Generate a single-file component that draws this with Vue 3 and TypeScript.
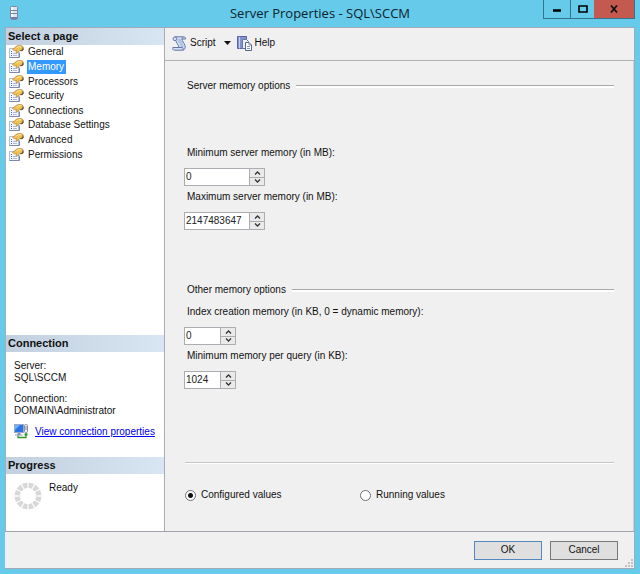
<script setup lang="ts">
import { reactive, ref } from 'vue'

interface Field {
  id: string
  label: string
  value: string
  narrow: boolean
}
interface Group {
  title: string
  spread: boolean
  fields: Field[]
}

const pages: string[] = [
  'General',
  'Memory',
  'Processors',
  'Security',
  'Connections',
  'Database Settings',
  'Advanced',
  'Permissions',
]
const current = ref('Memory')
const mode = ref('configured')

const groups = reactive<Group[]>([
  {
    title: 'Server memory options',
    spread: true,
    fields: [
      { id: 'min-server', label: 'Minimum server memory (in MB):', value: '0', narrow: false },
      { id: 'max-server', label: 'Maximum server memory (in MB):', value: '2147483647', narrow: false },
    ],
  },
  {
    title: 'Other memory options',
    spread: false,
    fields: [
      { id: 'index-mem', label: 'Index creation memory (in KB, 0 = dynamic memory):', value: '0', narrow: true },
      { id: 'query-mem', label: 'Minimum memory per query (in KB):', value: '1024', narrow: true },
    ],
  },
])

const spokes: number[] = Array.from({ length: 12 }, (_, i) => i * 30 + 15)

function step(field: Field, delta: number): void {
  field.value = String(Math.max(0, Number(field.value) + delta))
}
</script>

<template>
  <div class="window">
    <header class="titlebar">
      <svg class="server-icon" width="10" height="14" viewBox="0 0 10 14" aria-hidden="true">
        <rect x="0.5" y="0.5" width="7" height="13" rx="1" fill="#dfe3ee" stroke="#7f8ba6" />
        <path d="M2 1v12" stroke="#fff" stroke-width="1.5" />
        <path d="M1 4.500h6M1 7.500h6" stroke="#7784a0" />
        <rect x="1" y="11" width="6" height="2" fill="#6f80a8" />
      </svg>
      <h1 class="title">Server Properties - SQL\SCCM</h1>
      <div class="controls">
        <button type="button" class="ctl min" aria-label="Minimize">
          <svg width="10" height="10" viewBox="0 0 10 10"><path d="M1 6.5h8" stroke="#000" stroke-width="2.6" /></svg>
        </button>
        <button type="button" class="ctl max" aria-label="Maximize">
          <svg width="10" height="10" viewBox="0 0 10 10"><path d="M1 2h8v6H1z" fill="none" stroke="#000" stroke-width="1.6" /></svg>
        </button>
        <button type="button" class="ctl close" aria-label="Close">
          <svg width="10" height="10" viewBox="0 0 10 10"><path d="M2 1.5l6 7M8 1.5l-6 7" stroke="#111" stroke-width="1.8" /></svg>
        </button>
      </div>
    </header>

    <div class="client">
      <div class="body">
        <aside class="sidebar">
          <h2 class="bar">Select a page</h2>
          <ul class="pages">
            <li v-for="page in pages" :key="page" class="page">
              <svg width="15" height="14" viewBox="0 0 15 14" aria-hidden="true">
                <rect x="0.5" y="3.5" width="9" height="9" fill="#f4f6fd" stroke="#b3bedb" />
                <path d="M.5 12.500h10V7.500" fill="none" stroke="#7b88ac" />
                <path d="M2 6.500h1M2 8.500h1M2 10.500h1" stroke="#5468b0" />
                <path d="M4 8.500h4M4 10.500h4" stroke="#a9b6de" />
                <path d="M3.500 4.500L7 1.500 9 .6h3.500l1.500 1.200v3.500l-2 .7-1.500-.4L8.500 8 7 7.500 7.500 5.500 5.500 5.800z" fill="#f0c052" stroke="#a07c34" stroke-width=".6" />
                <path d="M7.500 3L9.500 1.800h2.500" fill="none" stroke="#ffeb9c" />
                <path d="M11.500 5.500l2.500-.5V2.500" fill="none" stroke="#4a4030" />
              </svg>
              <button type="button" class="page-name" :class="{ selected: page === current }" @click="current = page">
                {{ page }}
              </button>
            </li>
          </ul>

          <section class="connection">
            <h2 class="bar">Connection</h2>
            <dl class="facts">
              <div>
                <dt>Server:</dt>
                <dd>SQL\SCCM</dd>
              </div>
              <div>
                <dt>Connection:</dt>
                <dd>DOMAIN\Administrator</dd>
              </div>
            </dl>
            <div class="view">
              <svg width="16" height="15" viewBox="0 0 16 15" aria-hidden="true">
                <rect x="0.500" y="0.500" width="9" height="8" fill="#2874e4" stroke="#9aa9c8" />
                <path d="M1 1h5L1 6z" fill="#6fb0fa" />
                <path d="M3.500 9h3v1.500h2v1H1v-1h2.500z" fill="#8694b4" />
                <rect x="10.500" y="0.500" width="3" height="8" rx="1" fill="#e6e9ef" stroke="#8a919e" />
                <path d="M11 3h2M11 5h2" stroke="#8a919e" />
                <path d="M4 11.500v2h8V9" fill="none" stroke="#2f9632" stroke-width="1.300" />
                <path d="M10.500 10.500h3" stroke="#2f9632" stroke-width="2" />
              </svg>
              <a href="#">View connection properties</a>
            </div>
          </section>

          <section class="progress">
            <h2 class="bar">Progress</h2>
            <div class="status">
              <svg width="28" height="28" viewBox="-14 -14 28 28" aria-hidden="true">
                <path
                  v-for="angle in spokes"
                  :key="angle"
                  d="M-2.800 -13.300L2.800 -13.300L1.700 -8L-1.700 -8Z"
                  fill="#d8d8d8"
                  :transform="`rotate(${angle})`"
                />
              </svg>
              <span>Ready</span>
            </div>
          </section>
        </aside>

        <main class="main">
          <div class="toolbar">
            <button type="button" class="tool">
              <svg width="15" height="15" viewBox="0 0 15 15" aria-hidden="true">
                <path d="M3 .8h8.500c1.500 0 2.200 1 2.200 2.200H10c0 2 2.200 4 3 6.500.6 2-.2 4.500-2 4.700H2.500C1 14.200.5 13 .8 11.500H7C6.500 8.500 4 6.500 3.800 4.500H2C.5 4 .8 1 3 .8z" fill="#d3def5" stroke="#6577a5" />
                <path d="M3 .8c1.500 0 2 1.200 1.800 3.500M10 3c0-1 .5-2 1.500-2M7 11.500h3.500c.8.500.8 2 .2 2.700" fill="none" stroke="#6577a5" />
                <path d="M6 4h3M6.500 6h3.500M8 8h3M8.500 10h3" stroke="#93a5d0" />
              </svg>
              <span>Script</span>
            </button>
            <button type="button" class="drop" aria-label="Script options">
              <svg width="7" height="4" viewBox="0 0 7 4"><path d="M0 0h7L3.500 4z" fill="#111" /></svg>
            </button>
            <button type="button" class="tool">
              <svg width="15" height="15" viewBox="0 0 15 15" aria-hidden="true">
                <path d="M.5.500h9v12h-9z" fill="#8592cb" stroke="#56639f" />
                <path d="M2.500 1v11.500" stroke="#c3cdf0" />
                <path d="M5.500 3.500h4l2 2v7h-6z" fill="#eef2fc" stroke="#6878a8" />
                <path d="M8.500 6.500h3.500l2.500 2.500v5.500h-6z" fill="#fff" stroke="#566490" />
                <path d="M12 6.500V9h2.500M10 10.500h3M10 12.500h3" fill="none" stroke="#8796c0" />
              </svg>
              <span>Help</span>
            </button>
          </div>

          <form class="form" @submit.prevent>
            <section v-for="group in groups" :key="group.title" class="group" :class="{ spread: group.spread }">
              <h3 class="group-title">{{ group.title }}</h3>
              <div class="fields">
                <div v-for="field in group.fields" :key="field.id" class="field">
                  <label :for="field.id">{{ field.label }}</label>
                  <div class="spinner" :class="{ narrow: field.narrow }">
                    <input :id="field.id" v-model="field.value" type="text" inputmode="numeric" />
                    <div class="arrows">
                      <button type="button" aria-label="Increase" @click="step(field, 1)">
                        <svg width="7" height="4" viewBox="0 0 7 4"><path d="M1 3.500l2.500-2.500L6 3.500" fill="none" stroke="#333" stroke-width="1.300" /></svg>
                      </button>
                      <button type="button" aria-label="Decrease" @click="step(field, -1)">
                        <svg width="7" height="4" viewBox="0 0 7 4"><path d="M1 .5l2.500 2.500L6 .5" fill="none" stroke="#333" stroke-width="1.300" /></svg>
                      </button>
                    </div>
                  </div>
                </div>
              </div>
            </section>

            <div class="modes">
              <label class="mode"><input v-model="mode" type="radio" name="mode" value="configured" />Configured values</label>
              <label class="mode"><input v-model="mode" type="radio" name="mode" value="running" />Running values</label>
            </div>
          </form>
        </main>
      </div>

      <footer class="footer">
        <button type="button" class="push default">OK</button>
        <button type="button" class="push">Cancel</button>
        <svg class="grip" width="8" height="8" viewBox="0 0 8 8" aria-hidden="true">
          <path d="M6 0h2v2H6zM3 3h2v2H3zM6 3h2v2H6zM0 6h2v2H0zM3 6h2v2H3zM6 6h2v2H6z" fill="#c2c2c2" />
        </svg>
      </footer>
    </div>
  </div>
</template>

<style>
body {
  margin: 0;
}
</style>

<style scoped>
* {
  box-sizing: border-box;
}
.window {
  display: flex;
  flex-direction: column;
  min-height: 100vh;
  padding: 0 5px 5px;
  background: #66caea;
  color: #111;
  font: 10px/12px "Liberation Sans", Arial, sans-serif;
}
h1,
h2,
h3,
ul,
dl,
dd {
  margin: 0;
  padding: 0;
  font-size: inherit;
  font-weight: normal;
}
button {
  margin: 0;
  padding: 0;
  border: 0;
  background: none;
  color: inherit;
  font: inherit;
}
svg {
  display: block;
  flex: none;
}

.titlebar {
  display: grid;
  grid-template-columns: 92px 1fr 92px;
  height: 27px;
}
.server-icon {
  margin: 6px 0 0 5px;
}
.title {
  color: #0b222b;
  font: 13px/27px "Open Sans", "Noto Sans", sans-serif;
  text-align: center;
}
.controls {
  display: flex;
  height: 19px;
  border: 1px solid #36748b;
  border-top: 0;
}
.ctl {
  display: flex;
  align-items: center;
  justify-content: center;
}
.min {
  width: 26px;
}
.max {
  width: 24px;
  border-left: 1px solid #36748b;
}
.close {
  flex: 1;
  background: #c3594f;
}

.client {
  display: flex;
  flex: 1;
  flex-direction: column;
  border: 1px solid #a3aab5;
  border-width: 1px 1px 1px 0;
  background: #f0f0f0;
}
.body {
  display: flex;
  flex: 1;
}

.sidebar {
  display: flex;
  flex: none;
  flex-direction: column;
  width: 160px;
  border: 1px solid #a9acb5;
  border-width: 0 1px 0 1px;
  background: #fff;
}
.bar {
  height: 17px;
  padding-left: 2px;
  background: linear-gradient(90deg, #c2d0df, #d8e6f3);
  font-size: 11px;
  font-weight: bold;
  line-height: 17px;
}
.pages {
  display: grid;
  grid-template-rows: repeat(8, 1fr);
  height: 117px;
  margin-bottom: auto;
  list-style: none;
}
.page {
  display: flex;
  align-items: center;
  gap: 3px;
  padding-left: 3px;
}
.page-name {
  height: 14px;
  padding: 0 2px 0 1px;
  line-height: 14px;
}
.selected {
  background: #3399ff;
  color: #fff;
}
.connection {
  height: 122px;
}
.facts {
  display: flex;
  flex-direction: column;
  gap: 9px;
  padding: 8px 8px 0;
}
.view {
  display: flex;
  align-items: center;
  gap: 5px;
  padding: 7px 0 0 8px;
  white-space: nowrap;
}
.view a {
  color: #0000f0;
}
.progress {
  height: 74px;
}
.status {
  display: flex;
  gap: 7px;
  padding: 8px 8px 0;
}

.main {
  display: flex;
  flex: 1;
  flex-direction: column;
}
.toolbar {
  display: flex;
  align-items: center;
  height: 33px;
  padding: 0 7px 2px;
  border-bottom: 1px solid #b0b2b6;
}
.tool {
  display: flex;
  align-items: center;
  gap: 3px;
}
.drop {
  padding: 4px 6px 4px 8px;
}
.form {
  display: flex;
  flex: 1;
  flex-direction: column;
  padding: 18px 19px 0;
  border-right: 1px solid #d0d0d3;
}
.group {
  margin-bottom: 53px;
}
.group-title {
  display: flex;
  align-items: center;
  gap: 6px;
  padding-left: 3px;
  line-height: 14px;
}
.group-title::after {
  flex: 1;
  height: 2px;
  border-top: 1px solid #a8a8a8;
  background: #fff;
  content: "";
}
.fields {
  display: flex;
  flex-direction: column;
  gap: 4px;
  margin-top: 8px;
}
.spread .fields {
  margin-top: 53px;
}
.field {
  display: flex;
  flex-direction: column;
  gap: 8px;
}
.field label {
  padding-left: 3px;
  line-height: 14px;
}
.spinner {
  display: flex;
  width: 81px;
  height: 18px;
  border: 1px solid #abadb3;
  background: #fff;
}
.narrow {
  width: 52px;
}
.spinner input {
  flex: 1;
  min-width: 0;
  padding: 0 0 0 1px;
  border: 0;
  outline: 0;
  background: none;
  color: #222;
  font: inherit;
}
.arrows {
  display: flex;
  flex-direction: column;
  width: 15px;
}
.arrows button {
  display: flex;
  flex: 1;
  align-items: center;
  justify-content: center;
  border: 1px solid #acacb0;
  border-width: 0 0 0 1px;
  background: #eaeaea;
}
.arrows button + button {
  border-top-width: 1px;
}
.modes {
  display: grid;
  grid-template-columns: 175px 1fr;
  margin: auto 0 0 1px;
  height: 69px;
  padding-top: 25px;
  border-top: 1px solid #c4c4c4;
  box-shadow: inset 0 1px #fff;
}
.mode {
  display: flex;
  align-items: center;
  align-self: start;
  gap: 5px;
  height: 14px;
}
.mode input {
  width: 11px;
  height: 11px;
  margin: 0;
  border: 1px solid #707070;
  border-radius: 50%;
  appearance: none;
  background: #fff;
}
.mode input:checked {
  background: radial-gradient(circle, #111 0 2px, #fff 3px);
}

.footer {
  display: flex;
  align-items: center;
  justify-content: flex-end;
  gap: 8px;
  height: 37px;
  padding: 0 1px 0 8px;
  border-top: 1px solid #a0a2ad;
}
.push {
  width: 68px;
  height: 19px;
  border: 1px solid #787878;
  background: #dfdfdf;
}
.default {
  border-color: #5588bd;
}
.grip {
  align-self: flex-end;
  margin: 0 0 1px -1px;
}
</style>
